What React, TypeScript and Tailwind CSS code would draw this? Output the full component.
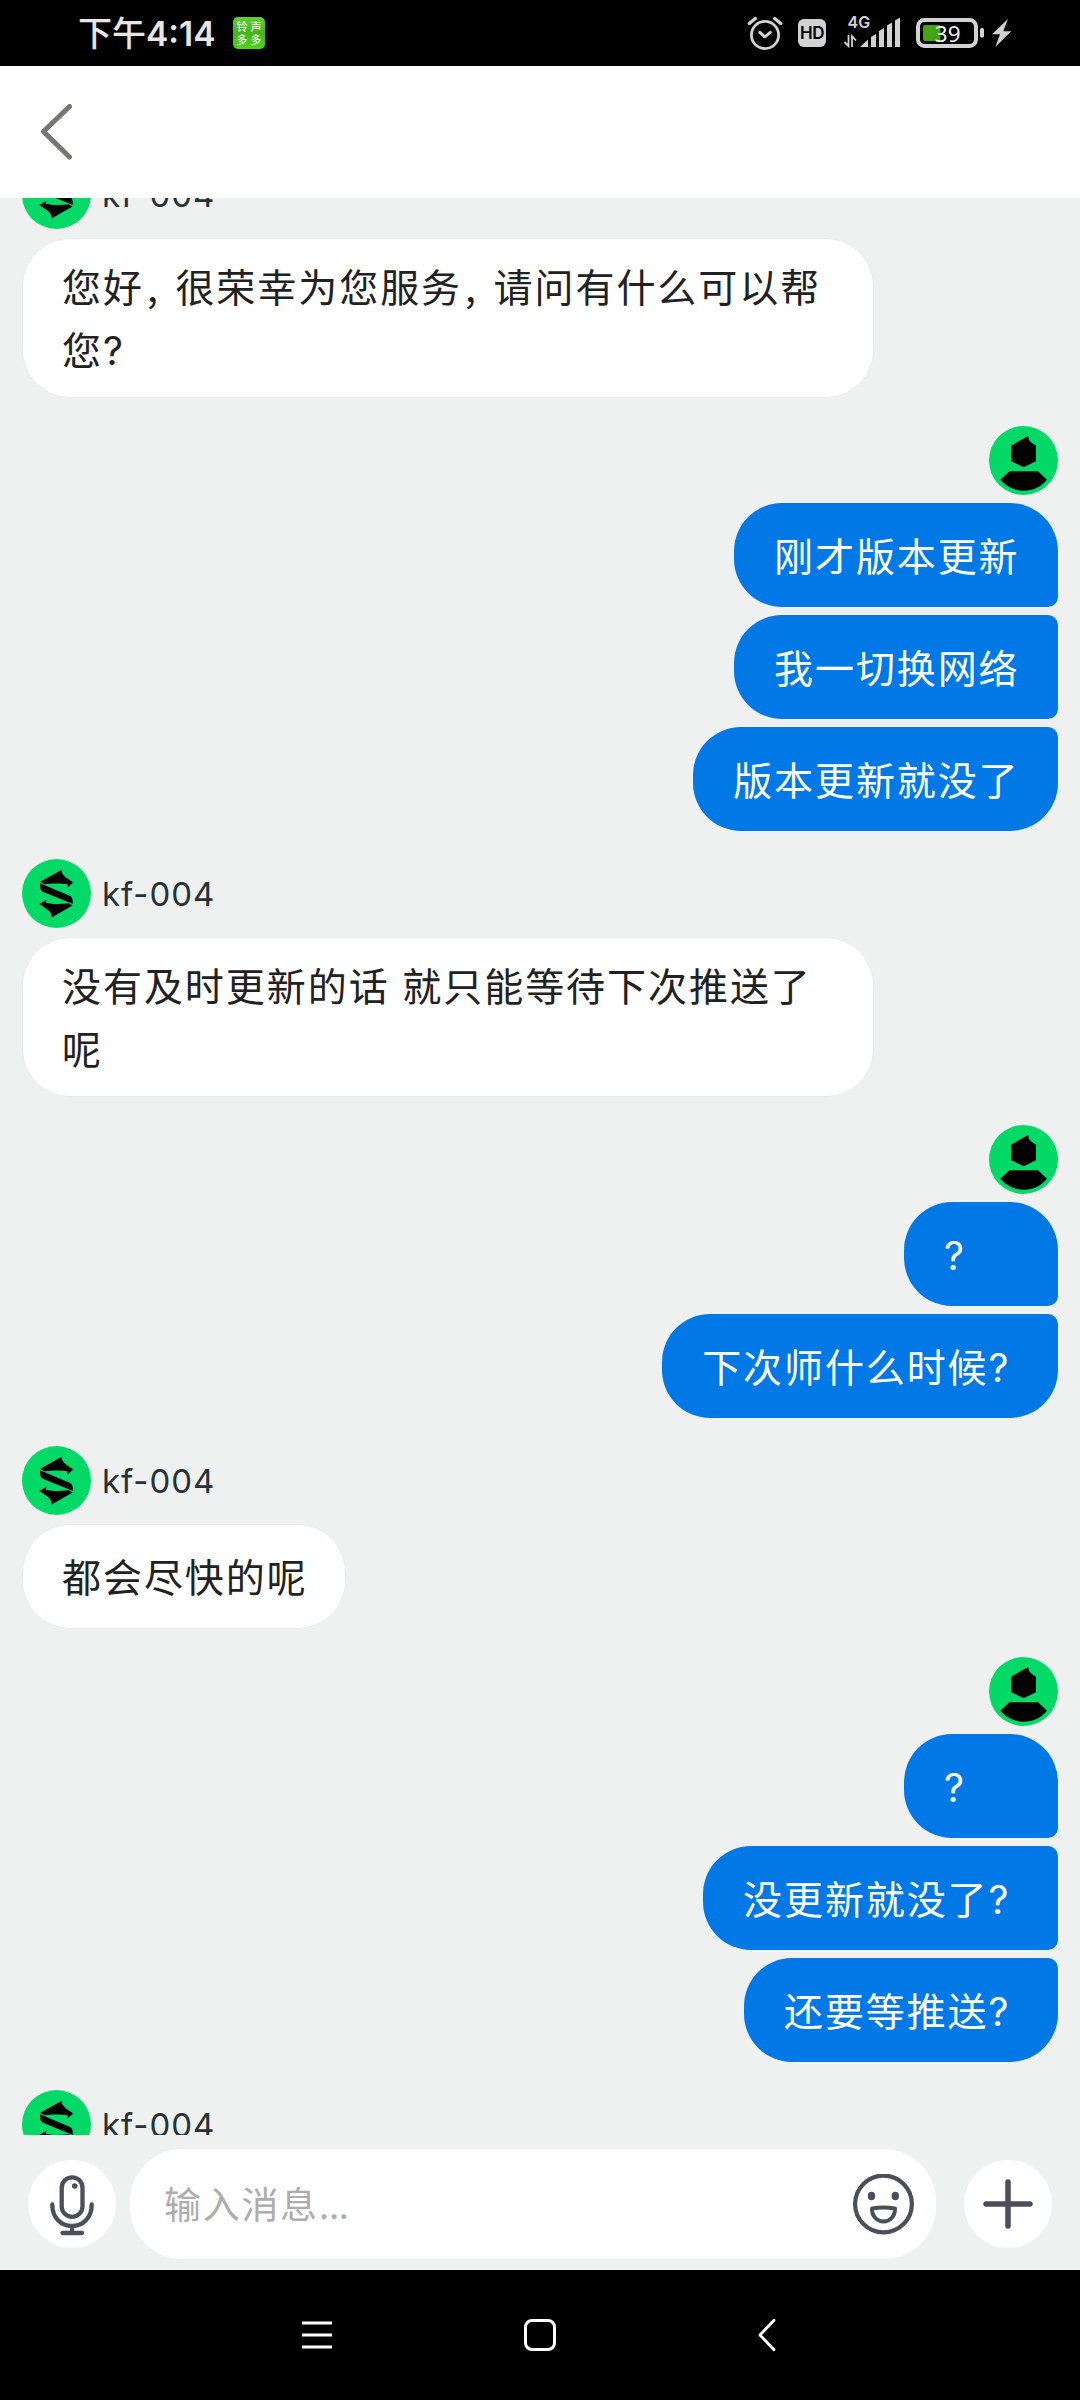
import type { ReactNode } from "react";
import clsx from "clsx";

type Message = { text: ReactNode; wide?: boolean };
type Group = { from: "agent" | "me"; messages: Message[] };

/* Punctuation is narrower than a full character cell */
const Comma = () => <span className="inline-block w-[31.5px] pl-[3px] tracking-normal whitespace-nowrap">,</span>;
const Mark = () => <span className="inline-block w-[31px] font-['Inter',sans-serif] text-[39px] tracking-normal">?</span>;

const groups: Group[] = [
  {
    from: "agent",
    messages: [{ text: <>您好<Comma />很荣幸为您服务<Comma />请问有什么可以帮<br />您<Mark /></>, wide: true }],
  },
  {
    from: "me",
    messages: [{ text: "刚才版本更新" }, { text: "我一切换网络" }, { text: "版本更新就没了" }],
  },
  {
    from: "agent",
    messages: [{ text: <>没有及时更新的话 就只能等待下次推送了<br />呢</>, wide: true }],
  },
  {
    from: "me",
    messages: [{ text: <Mark /> }, { text: <>下次师什么时候<Mark /></> }],
  },
  {
    from: "agent",
    messages: [{ text: "都会尽快的呢" }],
  },
  {
    from: "me",
    messages: [{ text: <Mark /> }, { text: <>没更新就没了<Mark /></> }, { text: <>还要等推送<Mark /></> }],
  },
  { from: "agent", messages: [] },
];

/* ─────────────────────────────────────────────
   AVATARS
───────────────────────────────────────────── */
function AgentAvatar() {
  return (
    <svg viewBox="0 0 69 69" className="size-[69px] shrink-0">
      <circle cx="34.5" cy="34.5" r="34.5" fill="#03d967" />
      <path d="M18.300 22.800 39.700 10.700C39.600 15 41.500 17 51.300 23.500L45.200 28.700 46 25.600C40 24.200 30 24.300 22.500 25.200Z" />
      <path d="M18 24.300 47 36.500C50 37.800 50.800 39 50.800 45L21.500 33C18.500 31.700 18 30 18 24.300Z" />
      <path d="M50.500 46.400 29.700 58.500C29.600 53.500 27.500 51.500 17.300 45L24.700 40.700 23.700 43.700C30 45.300 39 45.300 46.500 44.200Z" />
    </svg>
  );
}

function UserAvatar() {
  return (
    <svg viewBox="0 0 69 69" className="size-[69px] shrink-0">
      <circle cx="34.5" cy="34.5" r="34.5" fill="#03d967" />
      <path d="M39.300 10C39.300 15 42 16.500 47 19.500V35.300L34.700 41.300 22.300 35.300V19.500Z" />
      <path d="M20.500 45.200H49L58 53.800C46 68.500 24 68.500 11.300 53.800Z" />
    </svg>
  );
}

/* ─────────────────────────────────────────────
   STATUS BAR
───────────────────────────────────────────── */
function StatusBar() {
  return (
    <div className="flex h-[66px] shrink-0 items-center bg-black pl-[78px] pr-[68px]">
      <span className="w-[155px] text-[34px] leading-[66px] font-medium whitespace-nowrap text-[#e6e6e6]">
        下午<span className="font-['Inter',sans-serif] text-[33.500px] font-semibold">4:14</span>
      </span>
      <span className="grid size-8 grid-cols-2 place-items-center rounded-[5px] bg-linear-to-b from-[#5cd232] via-[#45b31c] to-[#52d41f] px-0.5 py-[3px] text-[11px] leading-[13px] text-white">
        <span>铃</span>
        <span>声</span>
        <span>多</span>
        <span>多</span>
      </span>

      {/* Alarm */}
      <svg viewBox="0 0 36 66" className="ml-auto h-[66px] w-9" fill="none" stroke="#d2d2d2" strokeLinecap="round">
        <circle cx="18" cy="35" r="13.600" strokeWidth="2.800" />
        <path d="m12.800 32.300 5 4.500 5.500-4.500" strokeWidth="3" strokeLinejoin="round" />
        <path d="m2.300 23.500 6-5M27.700 18.500l6 5" strokeWidth="3.400" />
      </svg>

      <span className="ml-[15px] flex size-7 items-center justify-center rounded-md bg-[#d2d2d2] font-['Inter',sans-serif] text-[17px] leading-none font-semibold tracking-[-0.6px] text-black">
        HD
      </span>

      {/* Signal */}
      <svg viewBox="0 0 57 66" className="ml-[17px] h-[66px] w-[57px]" fill="#d2d2d2">
        <text x="4.500" y="28" className="font-['Inter',sans-serif] text-[16px] font-semibold">4G</text>
        <path d="M17 47 25 39.500V47ZM28 37l5-3v13h-5ZM36 31l5-3v19h-5ZM44 25.500l5-3V47h-5ZM52 20.500l5-3V47h-5Z" />
        <path d="M5.500 35v11L1.500 42M9 47V36l4 4.500" fill="none" stroke="#d2d2d2" strokeWidth="1.800" />
      </svg>

      {/* Battery */}
      <svg viewBox="0 0 96 66" className="ml-4 h-[66px] w-24" fill="#d2d2d2">
        <rect x="2" y="20" width="58" height="26" rx="6.500" fill="none" stroke="#d2d2d2" strokeWidth="4" />
        <rect x="7" y="25" width="17.500" height="16" rx="2" fill="#45a315" />
        <rect x="64" y="28" width="4" height="9.500" rx="1.500" />
        <text x="18.800" y="41.500" className="font-['Noto_Sans',sans-serif] text-[22.500px]" fill="#f0f0f0">39</text>
        <path d="M92 19 76 34.200h8L79.300 47 95.300 31.200H87.200Z" />
      </svg>
    </div>
  );
}

function Header() {
  return (
    <header className="flex h-[132px] shrink-0 items-center bg-white pl-10">
      <svg viewBox="0 0 34 56" className="h-14 w-[34px]" fill="none" stroke="#777772" strokeWidth="5" strokeLinecap="round" strokeLinejoin="round">
        <path d="M29.500 2.500 3.500 27.500l26 25.500" />
      </svg>
    </header>
  );
}

/* ─────────────────────────────────────────────
   CHAT
───────────────────────────────────────────── */
function AgentGroup({ messages }: { messages: Message[] }) {
  return (
    <div className="flex flex-col items-start gap-[9px]">
      <div className="flex h-[69px] items-center">
        <AgentAvatar />
        <span className="ml-[11px] pt-0.5 font-['Inter',sans-serif] text-[33px] leading-[67px] tracking-[0.95px] text-[#263238]">kf-004</span>
      </div>
      {messages.map((m, i) => (
        <p
          key={i}
          className={clsx(
            "rounded-[48px] border border-[#eaecec] bg-white pl-[39px] text-[39px] leading-[63px] tracking-[1.95px] text-[#212121]",
            m.wide ? "h-40 w-[852px] pt-[15px] [word-spacing:2px]" : "h-[105px] pt-[19px] pr-[37.5px]"
          )}
        >
          {m.text}
        </p>
      ))}
    </div>
  );
}

function MyGroup({ messages }: { messages: Message[] }) {
  return (
    <div className="flex flex-col items-end gap-2">
      <UserAvatar />
      {messages.map((m, i) => (
        <p
          key={i}
          className={clsx(
            "h-[104px] min-w-[154px] rounded-l-[48px] bg-[#0079e7] pt-5 pr-[38.5px] pl-10 text-[39px] leading-[63px] tracking-[1.9px] text-white",
            i === 0 ? "rounded-tr-[48px]" : "rounded-tr-[10px]",
            i === messages.length - 1 ? "rounded-br-[48px]" : "rounded-br-[10px]"
          )}
        >
          {m.text}
        </p>
      ))}
    </div>
  );
}

/* ─────────────────────────────────────────────
   COMPOSER
───────────────────────────────────────────── */
function Composer() {
  return (
    <footer className="flex h-[135px] shrink-0 items-center pt-[14px] pb-[11px] pl-7">
      <button className="size-[88px] rounded-full bg-white">
        <svg viewBox="0 0 88 88" className="size-[88px]" fill="none" stroke="#4c4f5a" strokeWidth="4.300" strokeLinecap="round">
          <rect x="33.700" y="17.300" width="20.800" height="39.600" rx="10.400" />
          <circle cx="46.700" cy="26" r="2.800" fill="#4c4f5a" stroke="none" />
          <path d="M24.300 44.500C24.300 58 33 66 44 66s19.700-8 19.700-21.500M44 66v7M34.500 73h19.500" />
        </svg>
      </button>

      <div className="ml-[14px] flex h-[110px] w-[806px] items-center justify-between rounded-[52px] bg-white pr-[22px] pl-[34px]">
        <span className="text-[37px] leading-[63px] tracking-[1.7px] text-[#adadad]">
          输入消息<span className="font-['Inter',sans-serif] tracking-[-0.8px]">...</span>
        </span>
        <svg viewBox="0 0 61 61" className="size-[61px]" fill="none" stroke="#4c4f5a" strokeWidth="4.200" strokeLinejoin="round">
          <circle cx="30.500" cy="30" r="28.400" />
          <ellipse cx="18.500" cy="22" rx="3.700" ry="4.200" fill="#4c4f5a" stroke="none" />
          <ellipse cx="42.300" cy="22" rx="3.700" ry="4.200" fill="#4c4f5a" stroke="none" />
          <path d="M19 34.500C26 33.200 35 33.200 42 34.500 42 42.500 37 47.500 30.500 47.500S19 42.500 19 34.500Z" strokeWidth="4" />
        </svg>
      </div>

      <button className="ml-7 size-[88px] rounded-full bg-white">
        <svg viewBox="0 0 88 88" className="size-[88px]" fill="none" stroke="#4c4f5a" strokeWidth="5.500" strokeLinecap="round">
          <path d="M44 22v44M22 44h44" />
        </svg>
      </button>
    </footer>
  );
}

function NavBar() {
  return (
    <nav className="flex h-[130px] shrink-0 items-center bg-black pl-[302px]">
      <svg viewBox="0 0 30 32" className="h-8 w-[30px]" stroke="#fff" strokeWidth="2.800">
        <path d="M0 4h30M0 16h30M0 28h30" />
      </svg>
      <svg viewBox="0 0 32 32" className="ml-48 size-8" fill="none" stroke="#fff" strokeWidth="3">
        <rect x="1.500" y="1.500" width="29" height="29" rx="6.500" />
      </svg>
      <svg viewBox="0 0 18 34" className="ml-[202px] h-[34px] w-[18px]" fill="none" stroke="#fff" strokeWidth="2.800" strokeLinecap="round" strokeLinejoin="round">
        <path d="M16 2.200 2 17l14 14.800" />
      </svg>
    </nav>
  );
}

export default function App() {
  return (
    <div className="flex h-[2400px] w-[1080px] flex-col overflow-hidden bg-[#eff1f1] font-['Noto_Sans_CJK_SC',sans-serif]">
      <StatusBar />
      <Header />
      <main className="h-[1937px] shrink-0 overflow-hidden">
        {/* scrolled so the first name row is partly under the header */}
        <div className="-mt-[38px] flex flex-col gap-7 px-[22px]">
          {groups.map((g, i) =>
            g.from === "agent" ? (
              <AgentGroup key={i} messages={g.messages} />
            ) : (
              <MyGroup key={i} messages={g.messages} />
            )
          )}
        </div>
      </main>
      <Composer />
      <NavBar />
    </div>
  );
}
